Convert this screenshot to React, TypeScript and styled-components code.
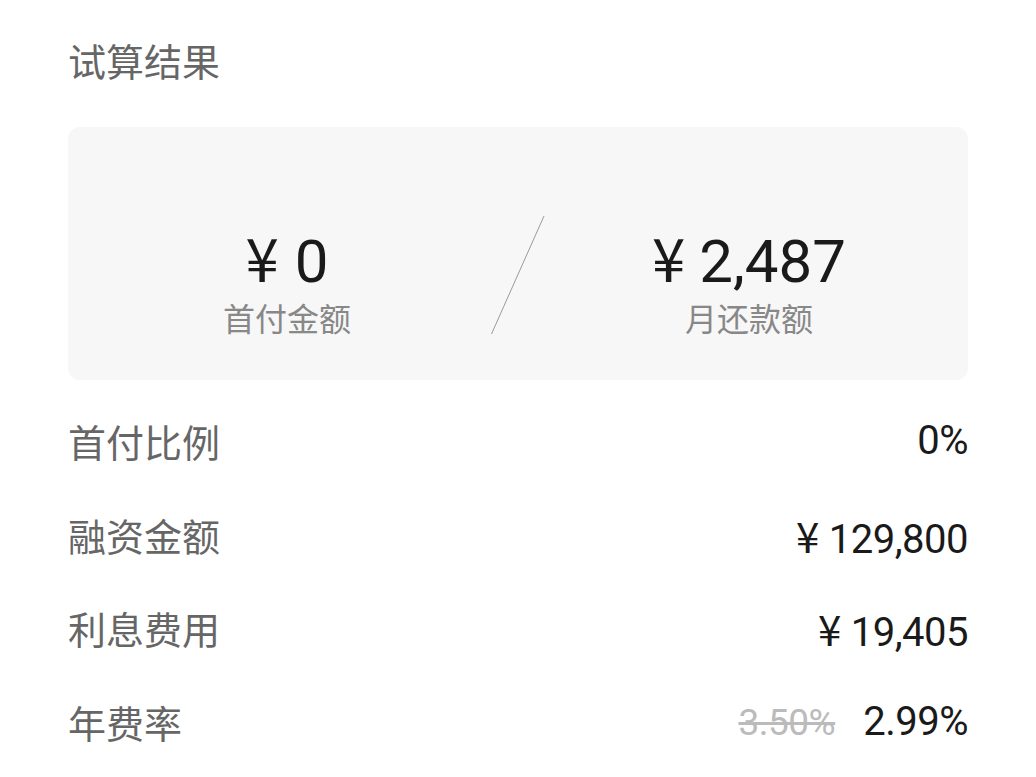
import React from "react";
import styled, { createGlobalStyle } from "styled-components";

const GlobalStyle = createGlobalStyle`
  html, body {
    margin: 0;
    padding: 0;
    background: #ffffff;
  }
  body {
    font-family: Roboto, "Noto Sans CJK SC", sans-serif;
  }
`;

const Page = styled.div`
  width: 1036px;
  height: 777px;
  box-sizing: border-box;
  padding: 34px 68px 0;
  overflow: hidden;
`;

const Title = styled.h2`
  margin: 0;
  font-family: "Noto Sans CJK SC", sans-serif;
  font-weight: 400;
  font-size: 38px;
  line-height: 52px;
  color: #666666;
`;

const Card = styled.section`
  margin-top: 41px;
  height: 253px;
  box-sizing: border-box;
  padding-top: 54px;
  background: #f7f7f7;
  border-radius: 12px;
  display: grid;
  grid-template-columns: 1fr 24px 1fr;
  align-items: center;
`;

const Summary = styled.div`
  display: flex;
  flex-direction: column;
  align-items: center;
`;

const Amount = styled.div`
  display: flex;
  align-items: baseline;
  font-family: Roboto, "Noto Sans CJK SC", sans-serif;
  font-size: 60px;
  line-height: 66px;
  color: #1a1a1a;
  white-space: nowrap;
`;

const Yen = styled.span<{ $size: number; $gap: number }>`
  font-family: "Noto Sans CJK SC", sans-serif;
  font-size: ${(p) => p.$size}px;
  margin-right: ${(p) => p.$gap}px;
`;

const SummaryLabel = styled.div`
  font-family: "Noto Sans CJK SC", sans-serif;
  font-size: 32px;
  line-height: 44px;
  color: #888888;
`;

const Divider = styled.div`
  height: 120px;
  display: flex;
  justify-content: center;
  margin-top: -12px;
`;

const DividerSvg = styled.svg`
  flex: none;
  overflow: visible;
`;

const Rows = styled.div`
  margin-top: 14px;
  display: flex;
  flex-direction: column;
`;

const Row = styled.div`
  height: 93.5px;
  display: flex;
  align-items: center;
  justify-content: space-between;
`;

const RowLabel = styled.span`
  font-family: "Noto Sans CJK SC", sans-serif;
  font-size: 38px;
  color: #666666;
`;

const RowValue = styled.span`
  display: flex;
  align-items: baseline;
  font-family: Roboto, "Noto Sans CJK SC", sans-serif;
  font-size: 40px;
  letter-spacing: -0.5px;
  color: #1a1a1a;
  white-space: nowrap;
`;

const OldRate = styled.s`
  font-size: 37px;
  color: #bbbbbb;
  margin-right: 28px;
`;

const summary = [
  { amount: "0", label: "首付金额" },
  { amount: "2,487", label: "月还款额" },
];

const rows: { label: string; value: string; yen?: boolean; old?: string }[] = [
  { label: "首付比例", value: "0%" },
  { label: "融资金额", value: "129,800", yen: true },
  { label: "利息费用", value: "19,405", yen: true },
  { label: "年费率", value: "2.99%", old: "3.50%" },
];

export default function App() {
  return (
    <>
      <GlobalStyle />
      <Page>
        <Title>试算结果</Title>
        <Card>
          <Summary>
            <Amount>
              <Yen $size={60} $gap={16}>¥</Yen>
              {summary[0].amount}
            </Amount>
            <SummaryLabel>{summary[0].label}</SummaryLabel>
          </Summary>
          <Divider>
            <DividerSvg width="54" height="120" viewBox="0 0 54 120">
              <line x1="53" y1="1" x2="0.5" y2="119" stroke="#9a9a9a" strokeWidth="1" />
            </DividerSvg>
          </Divider>
          <Summary>
            <Amount>
              <Yen $size={60} $gap={14}>¥</Yen>
              {summary[1].amount}
            </Amount>
            <SummaryLabel>{summary[1].label}</SummaryLabel>
          </Summary>
        </Card>
        <Rows>
          {rows.map((r) => (
            <Row key={r.label}>
              <RowLabel>{r.label}</RowLabel>
              <RowValue>
                {r.old && <OldRate>{r.old}</OldRate>}
                {r.yen && <Yen $size={42} $gap={10}>¥</Yen>}
                {r.value}
              </RowValue>
            </Row>
          ))}
        </Rows>
      </Page>
    </>
  );
}
